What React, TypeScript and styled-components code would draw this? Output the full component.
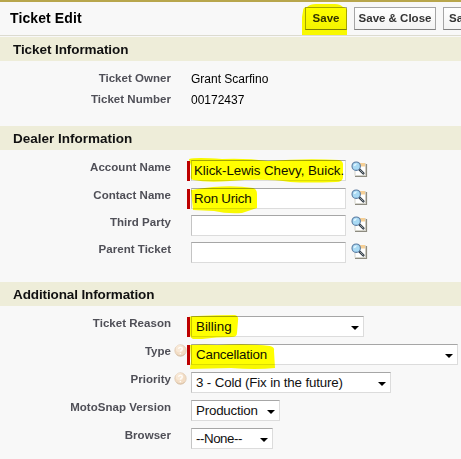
import React from "react";
import styled, { createGlobalStyle } from "styled-components";

const GlobalStyle = createGlobalStyle`
  * { box-sizing: border-box; }
  body { margin: 0; background: #f8f8f8; overflow: hidden; }
`;

const Page = styled.main`
  width: 461px;
  height: 459px;
  overflow: hidden;
  border-top: 2px solid #b8a64c;
  background: #f8f8f8;
  color: #111;
  font-family: "Liberation Sans", Arial, sans-serif;
  font-size: 12px;
`;

const Header = styled.header`
  display: flex;
  height: 34px;
  padding: 5px 0 0 10px;
  border-bottom: 1px solid #dcdbd0;
`;

const Title = styled.h1`
  width: 295px;
  flex: none;
  margin: 0;
  font-size: 14px;
  line-height: 23px;
  letter-spacing: 0.1px;
  color: #000;
`;

const Buttons = styled.div`
  display: flex;
  gap: 7px;
  flex: none;
`;

const Marked = styled.div`
  position: relative;
  flex: none;
`;

const Button = styled.button<{ $width: number; $start?: boolean }>`
  display: block;
  flex: none;
  width: ${(p) => p.$width}px;
  height: 23px;
  padding: ${(p) => (p.$start ? "0 0 1px 5px" : "0 0 1px")};
  border: 1px solid #a5a5a5;
  border-bottom-color: #7f7f7f;
  border-radius: 0;
  background: linear-gradient(#fff, #f3f3f3);
  color: #333;
  font: bold 11.5px/20px "Liberation Sans", Arial, sans-serif;
  text-align: ${(p) => (p.$start ? "left" : "center")};
  white-space: nowrap;
`;

const Band = styled.h2<{ $spacing: number }>`
  height: 24px;
  margin: 0;
  padding-left: 13px;
  background: #eeedd9;
  font-size: 13.5px;
  line-height: 25px;
  letter-spacing: ${(p) => p.$spacing}px;
  color: #111;
`;

const Section = styled.section<{ $height: number }>`
  height: ${(p) => p.$height}px;
`;

const Rows = styled.div<{ $top: number }>`
  padding-top: ${(p) => p.$top}px;
`;

const Row = styled.div<{ $height: number }>`
  display: grid;
  grid-template-columns: 171px 16px 4px auto 1fr;
  align-items: start;
  height: ${(p) => p.$height}px;
`;

const Label = styled.label`
  text-align: right;
  font-size: 11.5px;
  font-weight: bold;
  line-height: 15px;
  letter-spacing: 0.03px;
  color: #4f4f57;
  white-space: nowrap;
`;

const Value = styled.span`
  line-height: 17px;
  color: #000;
  white-space: nowrap;
`;

const Help = styled.svg`
  display: block;
  margin: 0 0 0 3px;
`;

const Required = styled.i<{ $on?: boolean }>`
  width: 3px;
  height: 20px;
  margin-top: 1px;
  background: ${(p) => (p.$on ? "#bd0000" : "transparent")};
`;

const Box = styled.div<{ $width: number; $inset: number; $spacing: number }>`
  position: relative;
  display: flex;
  align-items: center;
  width: ${(p) => p.$width}px;
  height: 21px;
  padding-left: ${(p) => p.$inset}px;
  border: 1px solid #dcdcdc;
  border-top-color: #a6a6a6;
  border-left-color: #c4c4c4;
  background: #fff;
  color: #111;
  font-size: 13.33px;
  line-height: 19px;
  letter-spacing: ${(p) => p.$spacing}px;
  white-space: nowrap;
`;

const Arrow = styled.svg`
  margin: 2px 4px 0 auto;
`;

const LookupIcon = styled.svg`
  margin: 1px 0 0 5px;
`;

const Ink = styled.svg<{ $left: number; $top: number }>`
  position: absolute;
  left: ${(p) => p.$left}px;
  top: ${(p) => p.$top}px;
  mix-blend-mode: multiply;
  pointer-events: none;
`;

type Mark = { d: string; w: number; h: number; left: number; top: number };

const Marker = ({ d, w, h, left, top }: Mark) => (
  <Ink $left={left} $top={top} width={w} height={h} viewBox={`0 0 ${w} ${h}`}>
    <path d={d} fill="#ffff00" />
  </Ink>
);

const HelpIcon = () => (
  <Help width="13" height="13" viewBox="0 0 13 13">
    <circle cx="6.5" cy="6.5" r="5.7" fill="#f2dcc4" stroke="#e0ccb4" strokeWidth=".8" />
    <circle cx="5.6" cy="4.8" r="3.8" fill="#f8e8d6" />
    <path d="M4.6 4.9C4.8 2.7 8.4 2.9 8.2 5C8.1 6.3 6.5 6.3 6.4 7.6M6.4 9.1V10.2" fill="none" stroke="#fffdf8" strokeWidth="1.4" />
    <path d="M2.5 10.6Q6.5 13.5 10.6 10.3" fill="none" stroke="#d3b99d" strokeWidth=".7" />
  </Help>
);

const Lookup = () => (
  <LookupIcon width="17" height="17" viewBox="0 0 17 17">
    <path d="M4 2.5H14.5V14.5H4Z" fill="#fff" stroke="#d5d4cb" />
    <path d="M8 2H14V5.5H8Z" fill="#f5cf96" />
    <path d="M4 15.5H15.5V3" fill="none" stroke="#8d8b80" strokeWidth="1.2" />
    <path d="M8.3 8.3L12.4 12.4" stroke="#333d46" strokeWidth="2.4" strokeLinecap="round" />
    <path d="M9.2 9.1L12.4 12.3" stroke="#b8c0c5" strokeWidth=".8" />
    <circle cx="5.2" cy="5.2" r="4.2" fill="#a9daf4" stroke="#5879a0" strokeWidth="1.1" />
    <path d="M2.6 5.2C2.8 3.2 4 2.4 6 2.5L4.8 4.6Z" fill="#e4f6ff" />
  </LookupIcon>
);

type FieldProps = {
  label: string;
  height?: number;
  width: number;
  text?: string;
  textSpacing?: number;
  kind: "lookup" | "select";
  required?: boolean;
  help?: boolean;
  mark?: Mark;
};

const Field = ({ label, height = 28, width, text, textSpacing = 0, kind, required, help, mark }: FieldProps) => (
  <Row $height={height}>
    <Label>{label}</Label>
    <span>{help && <HelpIcon />}</span>
    <Required $on={required} />
    <Box $width={width} $inset={kind === "select" ? 4 : 2} $spacing={textSpacing}>
      <span>{text}</span>
      {kind === "select" && (
        <Arrow width="8" height="4" viewBox="0 0 8 4">
          <path d="M0 0H8L4 4Z" fill="#000" />
        </Arrow>
      )}
      {mark && <Marker {...mark} />}
    </Box>
    {kind === "lookup" && <Lookup />}
  </Row>
);

const App = () => (
  <Page>
    <GlobalStyle />
    <Header>
      <Title>Ticket Edit</Title>
      <Buttons>
        <Marked>
          <Button $width={42}>Save</Button>
          <Marker w={46} h={31} left={-3} top={-3} d="M1 7Q1 3 5 3Q8 0 14 0H33Q38 0 41 3Q46 3 45 9V31H0V13Z" />
        </Marked>
        <Button $width={82}>Save &amp; Close</Button>
        <Button $width={80} $start>Sa</Button>
      </Buttons>
    </Header>

    <Rows $top={1}>
      <Section $height={89}>
        <Band $spacing={-0.08}>Ticket Information</Band>
        <Rows $top={10}>
          <Row $height={21}>
            <Label>Ticket Owner</Label>
            <span />
            <span />
            <Value>Grant Scarfino</Value>
          </Row>
          <Row $height={21}>
            <Label>Ticket Number</Label>
            <span />
            <span />
            <Value>00172437</Value>
          </Row>
        </Rows>
      </Section>

      <Section $height={156}>
        <Band $spacing={0}>Dealer Information</Band>
        <Rows $top={10}>
          <Field kind="lookup" label="Account Name" width={155} text="Klick-Lewis Chevy, Buick." textSpacing={-0.03} required
            mark={{ w: 156, h: 26, left: -4, top: -4, d: "M1 2Q8 0 34 2Q58 1 80 4Q118 1 151 3Q156 4 155 10V20Q155 25 148 25Q120 26 102 25Q78 21 42 24Q20 26 5 23Q2 22 3 18V9Z" }} />
          <Field kind="lookup" label="Contact Name" height={27} width={155} text="Ron Urich" textSpacing={-0.2} required
            mark={{ w: 67, h: 29, left: -1, top: -4, d: "M0 5Q12 3 22 2Q44 0 62 3Q66 4 66 9V23Q60 25 51 28Q36 29 23 26L2 25Z" }} />
          <Field kind="lookup" label="Third Party" height={27} width={155} />
          <Field kind="lookup" label="Parent Ticket" width={155} />
        </Rows>
      </Section>

      <Section $height={175}>
        <Band $spacing={-0.12}>Additional Information</Band>
        <Rows $top={10}>
          <Field kind="select" label="Ticket Reason" width={173} text="Billing" required
            mark={{ w: 52, h: 25, left: -4, top: -2, d: "M1 2Q3 1 9 1Q29 0 47 0Q51 1 50 6L49 18Q49 22 44 22Q28 22 14 24L5 24Q2 23 2 19Z" }} />
          <Field kind="select" label="Type" width={267} text="Cancellation" textSpacing={-0.2} required help
            mark={{ w: 88, h: 27, left: -4, top: -2, d: "M2 2Q18 1 29 2Q61 0 82 3Q87 4 86 8L87 25Q68 27 43 25L2 26L3 18Z" }} />
          <Field kind="select" label="Priority" width={200} text="3 - Cold (Fix in the future)" textSpacing={-0.15} help />
          <Field kind="select" label="MotoSnap Version" width={89} text="Production" textSpacing={-0.2} />
          <Field kind="select" label="Browser" width={82} text="--None--" textSpacing={-0.45} />
        </Rows>
      </Section>
    </Rows>
  </Page>
);

export default App;
